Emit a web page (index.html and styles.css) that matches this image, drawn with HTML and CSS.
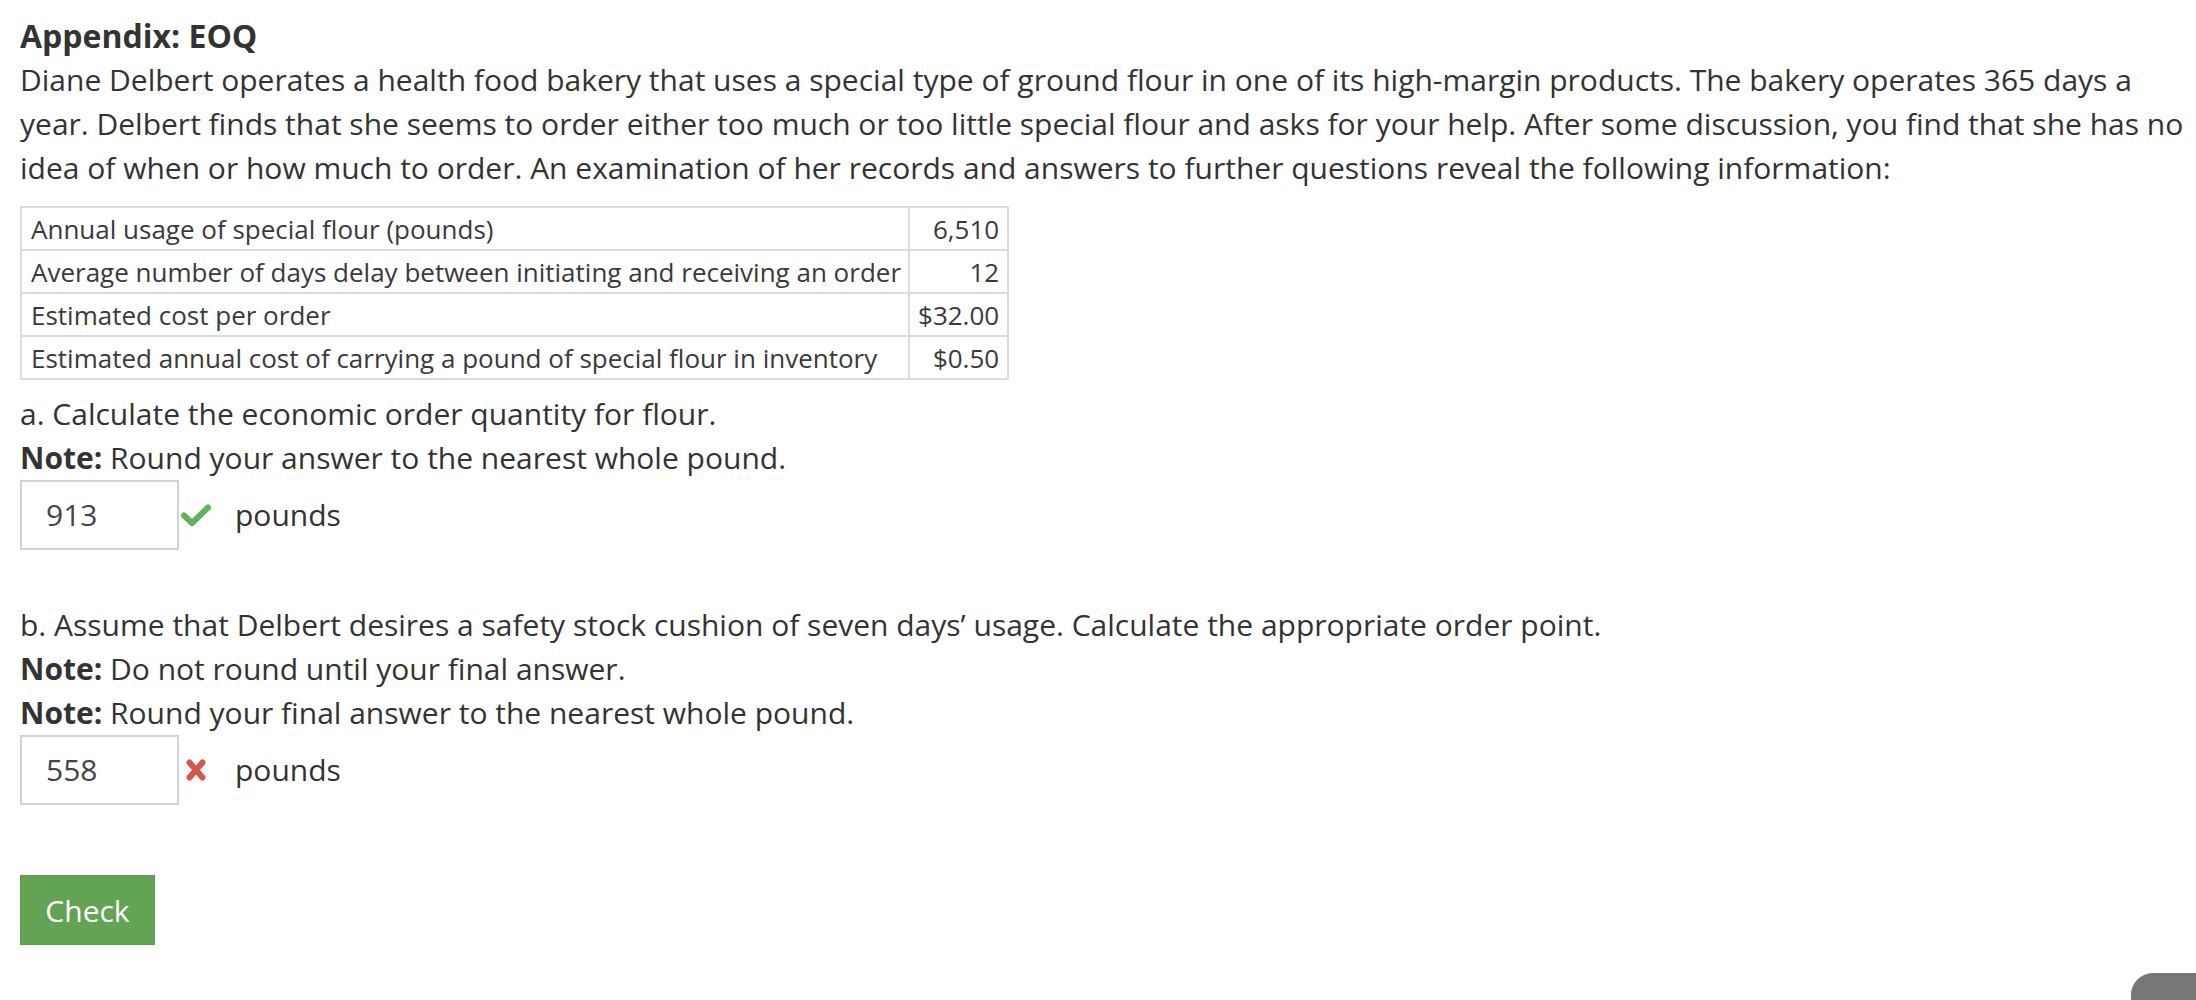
FILE: index.html
```html
<!DOCTYPE html>
<html>
<head>
<meta charset="utf-8">
<link rel="stylesheet" href="styles.css">
</head>
<body>
<div class="page">
  <div class="title">Appendix: EOQ</div>
  <p class="intro">Diane Delbert operates a health food bakery that uses a special type of ground flour in one of its high-margin products. The bakery operates 365 days a year. Delbert finds that she seems to order either too much or too little special flour and asks for your help. After some discussion, you find that she has no idea of when or how much to order. An examination of her records and answers to further questions reveal the following information:</p>
  <table class="data">
    <tr><td>Annual usage of special flour (pounds)</td><td class="num">6,510</td></tr>
    <tr><td>Average number of days delay between initiating and receiving an order</td><td class="num">12</td></tr>
    <tr><td>Estimated cost per order</td><td class="num">$32.00</td></tr>
    <tr><td>Estimated annual cost of carrying a pound of special flour in inventory</td><td class="num">$0.50</td></tr>
  </table>
  <div class="part part-a">
    <div class="line">a. Calculate the economic order quantity for flour.</div>
    <div class="line"><b>Note:</b> Round your answer to the nearest whole pound.</div>
    <div class="answer">
      <div class="box">913</div>
      <svg class="mark ok" width="30" height="22" viewBox="0 0 30 22"><path d="M3 11.5 L11 19 L27 3.5" fill="none" stroke="#63b35e" stroke-width="6" stroke-linejoin="round" stroke-linecap="round"/></svg>
      <span class="unit">pounds</span>
    </div>
  </div>
  <div class="part part-b">
    <div class="line">b. Assume that Delbert desires a safety stock cushion of seven days’ usage. Calculate the appropriate order point.</div>
    <div class="line"><b>Note:</b> Do not round until your final answer.</div>
    <div class="line"><b>Note:</b> Round your final answer to the nearest whole pound.</div>
    <div class="answer">
      <div class="box">558</div>
      <svg class="mark bad" width="30" height="22" viewBox="0 0 30 22"><path d="M8.5 3.5 L21.5 18.5 M21.5 3.5 L8.5 18.5" fill="none" stroke="#d6564e" stroke-width="6" stroke-linecap="round"/></svg>
      <span class="unit">pounds</span>
    </div>
  </div>
  <button class="check">Check</button>
</div>
<div class="corner-tab"></div>
</body>
</html>
```
FILE: styles.css
```css
html, body {
  margin: 0;
  padding: 0;
  background: #fff;
}
body {
  font-family: "Open Sans", "Liberation Sans", sans-serif;
  font-size: 30px;
  line-height: 44px;
  color: #333;
}
.page {
  padding: 13px 4px 0 20px;
}
.title {
  font-weight: 700;
  font-size: 32px;
  line-height: 45px;
}
.intro {
  margin: 0;
}
.data {
  margin-top: 16px;
  border-collapse: collapse;
  font-size: 26px;
  line-height: 30px;
  color: #3a3a3a;
}
.data td {
  border: 2px solid #dcdcdc;
  height: 41px;
  padding: 0 7px 0 9px;
  box-sizing: content-box;
}
.data td.num {
  text-align: right;
  padding: 0 8px;
}
.part-a {
  margin-top: 12px;
}
.part-b {
  margin-top: 53px;
}
.line b {
  font-weight: 700;
}
.answer {
  display: flex;
  align-items: center;
  height: 70px;
}
.box {
  box-sizing: border-box;
  width: 159px;
  height: 70px;
  border: 2px solid #cfd4d9;
  padding-left: 24px;
  line-height: 66px;
  color: #444;
}
.mark {
  margin-left: 2px;
}
.unit {
  margin-left: 24px;
}
.check {
  margin-top: 70px;
  width: 135px;
  height: 70px;
  background: #62a354;
  border: 1px solid #5c9c4f;
  color: #fff;
  font-family: "Open Sans", "Liberation Sans", sans-serif;
  font-size: 30px;
  padding: 0;
  display: block;
}
.corner-tab {
  position: fixed;
  right: 0;
  bottom: 0;
  width: 65px;
  height: 27px;
  background: #777;
  border-top-left-radius: 22px;
}
```
